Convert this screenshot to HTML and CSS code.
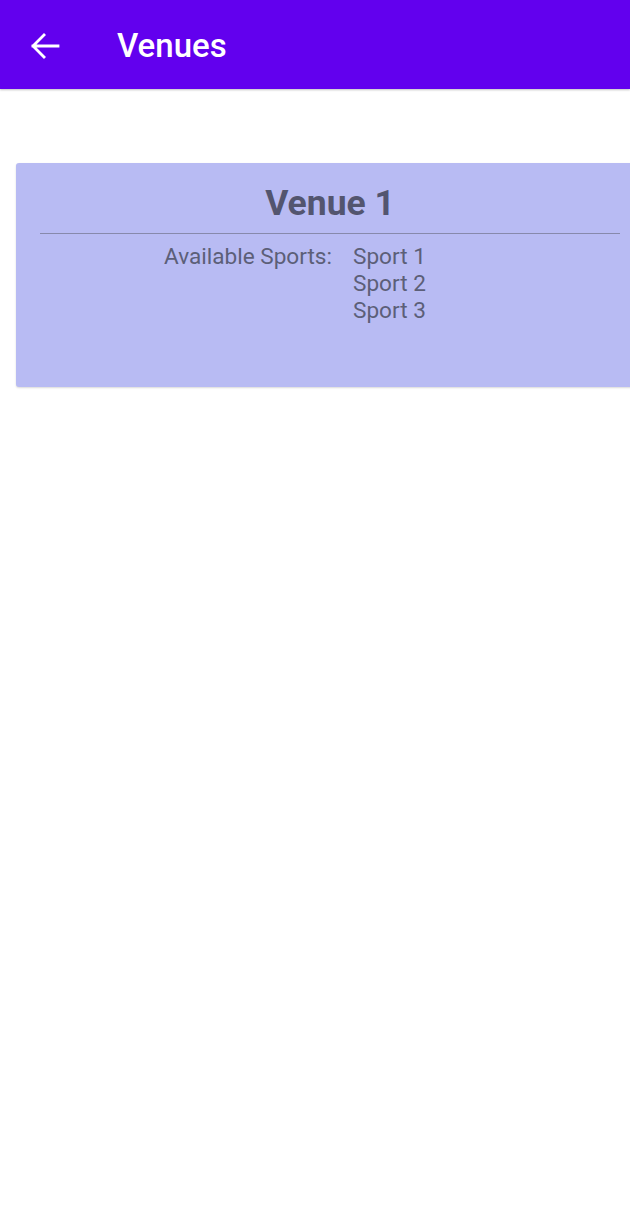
FILE: index.html
```html
<!DOCTYPE html>
<html>
<head>
<meta charset="utf-8">
<link rel="stylesheet" href="styles.css">
</head>
<body>
<header class="appbar">
  <span class="back">
    <svg width="30" height="28" viewBox="0 0 30 28"><path d="M28 14H3M14 3L3 14L14 25" fill="none" stroke="#fff" stroke-width="2.8" stroke-linecap="square"/></svg>
  </span>
  <h1 class="title">Venues</h1>
</header>
<main class="content">
  <section class="card">
    <h2 class="venue">Venue 1</h2>
    <hr class="divider">
    <div class="sports">
      <div class="label">Available Sports:</div>
      <div class="list">
        <div>Sport 1</div>
        <div>Sport 2</div>
        <div>Sport 3</div>
      </div>
    </div>
  </section>
</main>
</body>
</html>
```
FILE: styles.css
```css
html, body { margin: 0; padding: 0; }
body {
  font-family: Roboto, "Noto Sans", sans-serif;
  background: #fff;
  width: 630px;
  height: 1210px;
  overflow: hidden;
}
.appbar {
  height: 89px;
  background: #6200ee;
  display: flex;
  align-items: center;
  box-shadow: 0 1px 2px rgba(0,0,0,0.25);
  position: relative;
}
.back {
  width: 30px;
  height: 28px;
  margin-left: 30px;
  margin-top: 2px;
  display: flex;
}
.title {
  margin: 0 0 0 57px;
  color: #fff;
  font-size: 33px;
  font-weight: 500;
  line-height: 40px;
  padding-top: 2px;
}
.content {
  padding: 74px 0 0 16px;
}
.card {
  width: 624px;
  height: 224px;
  box-sizing: border-box;
  background: #b8bbf3;
  border-radius: 3px 0 0 3px;
  box-shadow: 0 1px 2px rgba(0,0,0,0.15);
  padding: 18px 20px 0 24px;
}
.venue {
  margin: 0;
  text-align: center;
  font-size: 35.5px;
  font-weight: 700;
  color: #53556f;
  line-height: 44px;
}
.divider {
  border: 0;
  border-top: 1px solid #8789ab;
  margin: 8px 0 0 0;
  width: 580px;
}
.sports {
  display: flex;
  margin-top: 9px;
  font-size: 22.6px;
  color: #5c5f78;
  line-height: 27px;
}
.label {
  width: 292px;
  text-align: right;
}
.list {
  margin-left: 21px;
}
```
